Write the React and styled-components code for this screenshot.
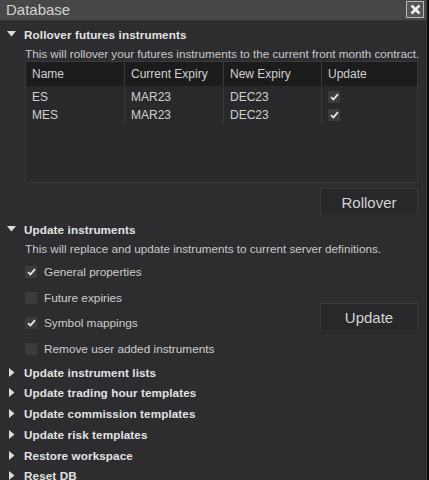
import React from "react";
import styled, { createGlobalStyle } from "styled-components";

const Global = createGlobalStyle`
  html, body { margin: 0; padding: 0; background: #111; }
  body { font-family: "Liberation Sans", Arial, sans-serif; }
  * { box-sizing: border-box; }
`;

const Page = styled.div`
  width: 429px;
  height: 480px;
  display: flex;
  background: #0b0b0b;
  overflow: hidden;
`;

const Dialog = styled.div`
  width: 427px;
  height: 480px;
  background: #2d2d30;
  border-right: 1px solid #3c3c3e;
  display: flex;
  flex-direction: column;
  overflow: hidden;
`;

const TitleBar = styled.div`
  height: 21px;
  flex: none;
  background: #474747;
  border-bottom: 1px solid #333;
  display: flex;
  align-items: center;
  justify-content: space-between;
  padding: 0 2px 0 6px;
`;

const Title = styled.div`
  color: #d2d2d2;
  font-size: 15px;
  line-height: 20px;
`;

const CloseBtn = styled.div`
  width: 18px;
  height: 17px;
  border: 1px solid #b8b8b8;
  background: #555;
  display: flex;
  align-items: center;
  justify-content: center;
  margin-top: -1px;
`;

const Body = styled.div`
  padding: 4px 8px 0 7px;
  display: flex;
  flex-direction: column;
`;

const SectionHeader = styled.div`
  display: flex;
  align-items: center;
  height: ${p => p.$h || 18}px;
  margin-top: ${p => p.$mt || 0}px;
  color: #e2e2e2;
  font-size: 11.7px;
  font-weight: bold;
  letter-spacing: 0.1px;
  white-space: nowrap;
`;

const Arrow = styled.span`
  width: 17px;
  flex: none;
  display: flex;
  align-items: center;
`;

const Desc = styled.div`
  padding-left: 18px;
  height: ${p => p.$h || 18}px;
  line-height: 18px;
  color: #c9c9c9;
  font-size: 11.7px;
  margin-top: ${p => p.$mt ?? 2}px;
  white-space: nowrap;
`;

const Table = styled.div`
  margin: 0 0 0 18px;
  height: 122px;
  background: #29292b;
  border: 1px solid #3a3a3c;
  display: flex;
  flex-direction: column;
`;

const Row = styled.div`
  display: grid;
  grid-template-columns: 98px 99px 98px 1fr;
  height: ${p => p.$h}px;
  background: ${p => p.$head ? "#1c1c1d" : "transparent"};
  margin-bottom: ${p => p.$head ? 2 : 0}px;
`;

const Cell = styled.div`
  padding-left: 6px;
  display: flex;
  align-items: center;
  color: #d0d0d0;
  font-size: 12px;
  border-left: ${p => p.$first ? "none" : "1px solid #3a3a3c"};
`;

const Check = styled.span`
  width: 12px;
  height: 12px;
  background: #3c3c3e;
  display: inline-flex;
  align-items: center;
  justify-content: center;
  flex: none;
`;

const ButtonRow = styled.div`
  display: flex;
  justify-content: flex-end;
  margin-top: 5px;
`;

const Button = styled.div`
  width: 98px;
  height: 28px;
  background: #28282a;
  border: 1px solid #3a3a3c;
  border-bottom-color: #2d2d30;
  color: #d4d4d4;
  font-size: 15px;
  display: flex;
  align-items: center;
  justify-content: center;
`;

const Options = styled.div`
  display: flex;
  justify-content: space-between;
  align-items: flex-start;
  margin-top: 1px;
`;

const OptList = styled.div`
  display: flex;
  flex-direction: column;
  padding-left: 18px;
`;

const Opt = styled.div`
  display: flex;
  align-items: center;
  height: 25.7px;
  color: #cdcdcd;
  font-size: 11.8px;
  gap: 7px;
`;

const UpdateWrap = styled.div`
  margin-top: 44px;
`;

const Collapsed = styled.div`
  display: flex;
  flex-direction: column;
  margin-top: 0;
`;

const Tick = () => (
  <svg width="9" height="8" viewBox="0 0 9 8">
    <path d="M1 4.2 L3.4 6.4 L8 1.2" stroke="#e6e6e6" strokeWidth="1.8" fill="none" />
  </svg>
);

const Down = () => (
  <svg width="9" height="6" viewBox="0 0 9 6"><path d="M0 0 H9 L4.5 5.5 Z" fill="#dcdcdc" /></svg>
);
const Right = () => (
  <svg width="6" height="9" viewBox="0 0 6 9" style={{ marginLeft: 2 }}><path d="M0 0 V9 L5.5 4.5 Z" fill="#dcdcdc" /></svg>
);

const rows = [
  ["ES", "MAR23", "DEC23"],
  ["MES", "MAR23", "DEC23"],
];

const opts = [
  ["General properties", true],
  ["Future expiries", false],
  ["Symbol mappings", true],
  ["Remove user added instruments", false],
];

const collapsed = [
  "Update instrument lists",
  "Update trading hour templates",
  "Update commission templates",
  "Update risk templates",
  "Restore workspace",
  "Reset DB",
];

export default function App() {
  return (
    <Page>
      <Global />
      <Dialog>
        <TitleBar>
          <Title>Database</Title>
          <CloseBtn>
            <svg width="11" height="11" viewBox="0 0 11 11">
              <path d="M1.5 1.5 L9.5 9.5 M9.5 1.5 L1.5 9.5" stroke="#f0f0f0" strokeWidth="2.6" />
            </svg>
          </CloseBtn>
        </TitleBar>
        <Body>
          <SectionHeader>
            <Arrow><Down /></Arrow>Rollover futures instruments
          </SectionHeader>
          <Desc $h={16}>This will rollover your futures instruments to the current front month contract.</Desc>
          <Table>
            <Row $head $h={24}>
              <Cell $first>Name</Cell>
              <Cell>Current Expiry</Cell>
              <Cell>New Expiry</Cell>
              <Cell>Update</Cell>
            </Row>
            {rows.map(r => (
              <Row key={r[0]} $h={18}>
                <Cell $first>{r[0]}</Cell>
                <Cell>{r[1]}</Cell>
                <Cell>{r[2]}</Cell>
                <Cell><Check><Tick /></Check></Cell>
              </Row>
            ))}
          </Table>
          <ButtonRow>
            <Button>Rollover</Button>
          </ButtonRow>
          <SectionHeader $h={20} $mt={3}>
            <Arrow><Down /></Arrow>Update instruments
          </SectionHeader>
          <Desc $mt={1}>This will replace and update instruments to current server definitions.</Desc>
          <Options>
            <OptList>
              {opts.map(([t, c]) => (
                <Opt key={t}>
                  <Check>{c && <Tick />}</Check>
                  {t}
                </Opt>
              ))}
            </OptList>
            <UpdateWrap>
              <Button>Update</Button>
            </UpdateWrap>
          </Options>
          <Collapsed>
            {collapsed.map(t => (
              <SectionHeader key={t} $h={20.75}>
                <Arrow><Right /></Arrow>{t}
              </SectionHeader>
            ))}
          </Collapsed>
        </Body>
      </Dialog>
    </Page>
  );
}
